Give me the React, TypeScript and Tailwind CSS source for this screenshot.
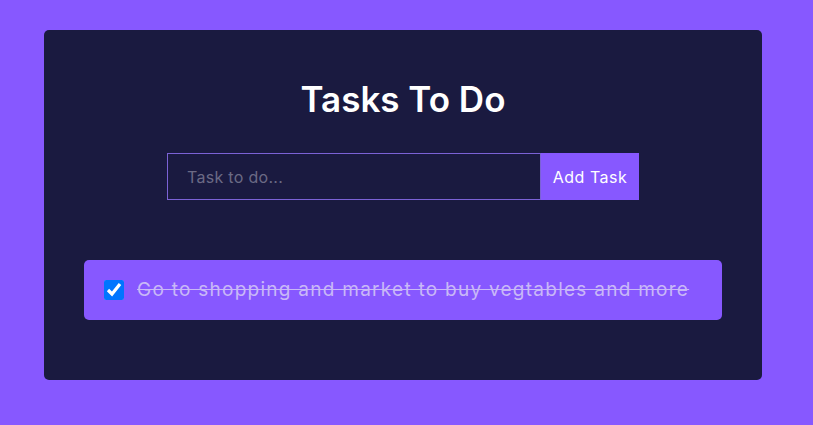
import React from "react";

export default function App() {
  return (
    <div className="min-h-[425px] w-full bg-[#8758ff] pt-[30px] pl-[44px]" style={{ fontFamily: "Inter, 'Noto Sans', sans-serif" }}>
      <div className="w-[718px] h-[350px] bg-[#1a1a40] rounded-[5px] px-[40px] pt-[48px] flex flex-col items-center">
        <h1 className="text-white text-[35px] font-semibold leading-[43px]">Tasks To Do</h1>
        <div className="flex mt-[32px] w-[472px] h-[47px]">
          <div className="flex-1 border border-[#7b62d6] flex items-center pl-[19px]">
            <input className="bg-transparent outline-none text-[16px] tracking-[0.3px] text-white placeholder:text-[#6b6a85] w-full" placeholder="Task to do..." />
          </div>
          <button className="w-[98px] bg-[#8758ff] text-white text-[16px] tracking-[0.5px]">Add Task</button>
        </div>
        <div className="self-stretch mt-[60px] h-[60px] bg-[#8758ff] rounded-[5px] flex items-center pl-[20px]">
          <input type="checkbox" defaultChecked className="w-[20px] h-[20px] m-0" />
          <span className="ml-[13px] text-[19px] tracking-[1.26px] text-[#c9b8f7] line-through">Go to shopping and market to buy vegtables and more</span>
        </div>
      </div>
    </div>
  );
}
